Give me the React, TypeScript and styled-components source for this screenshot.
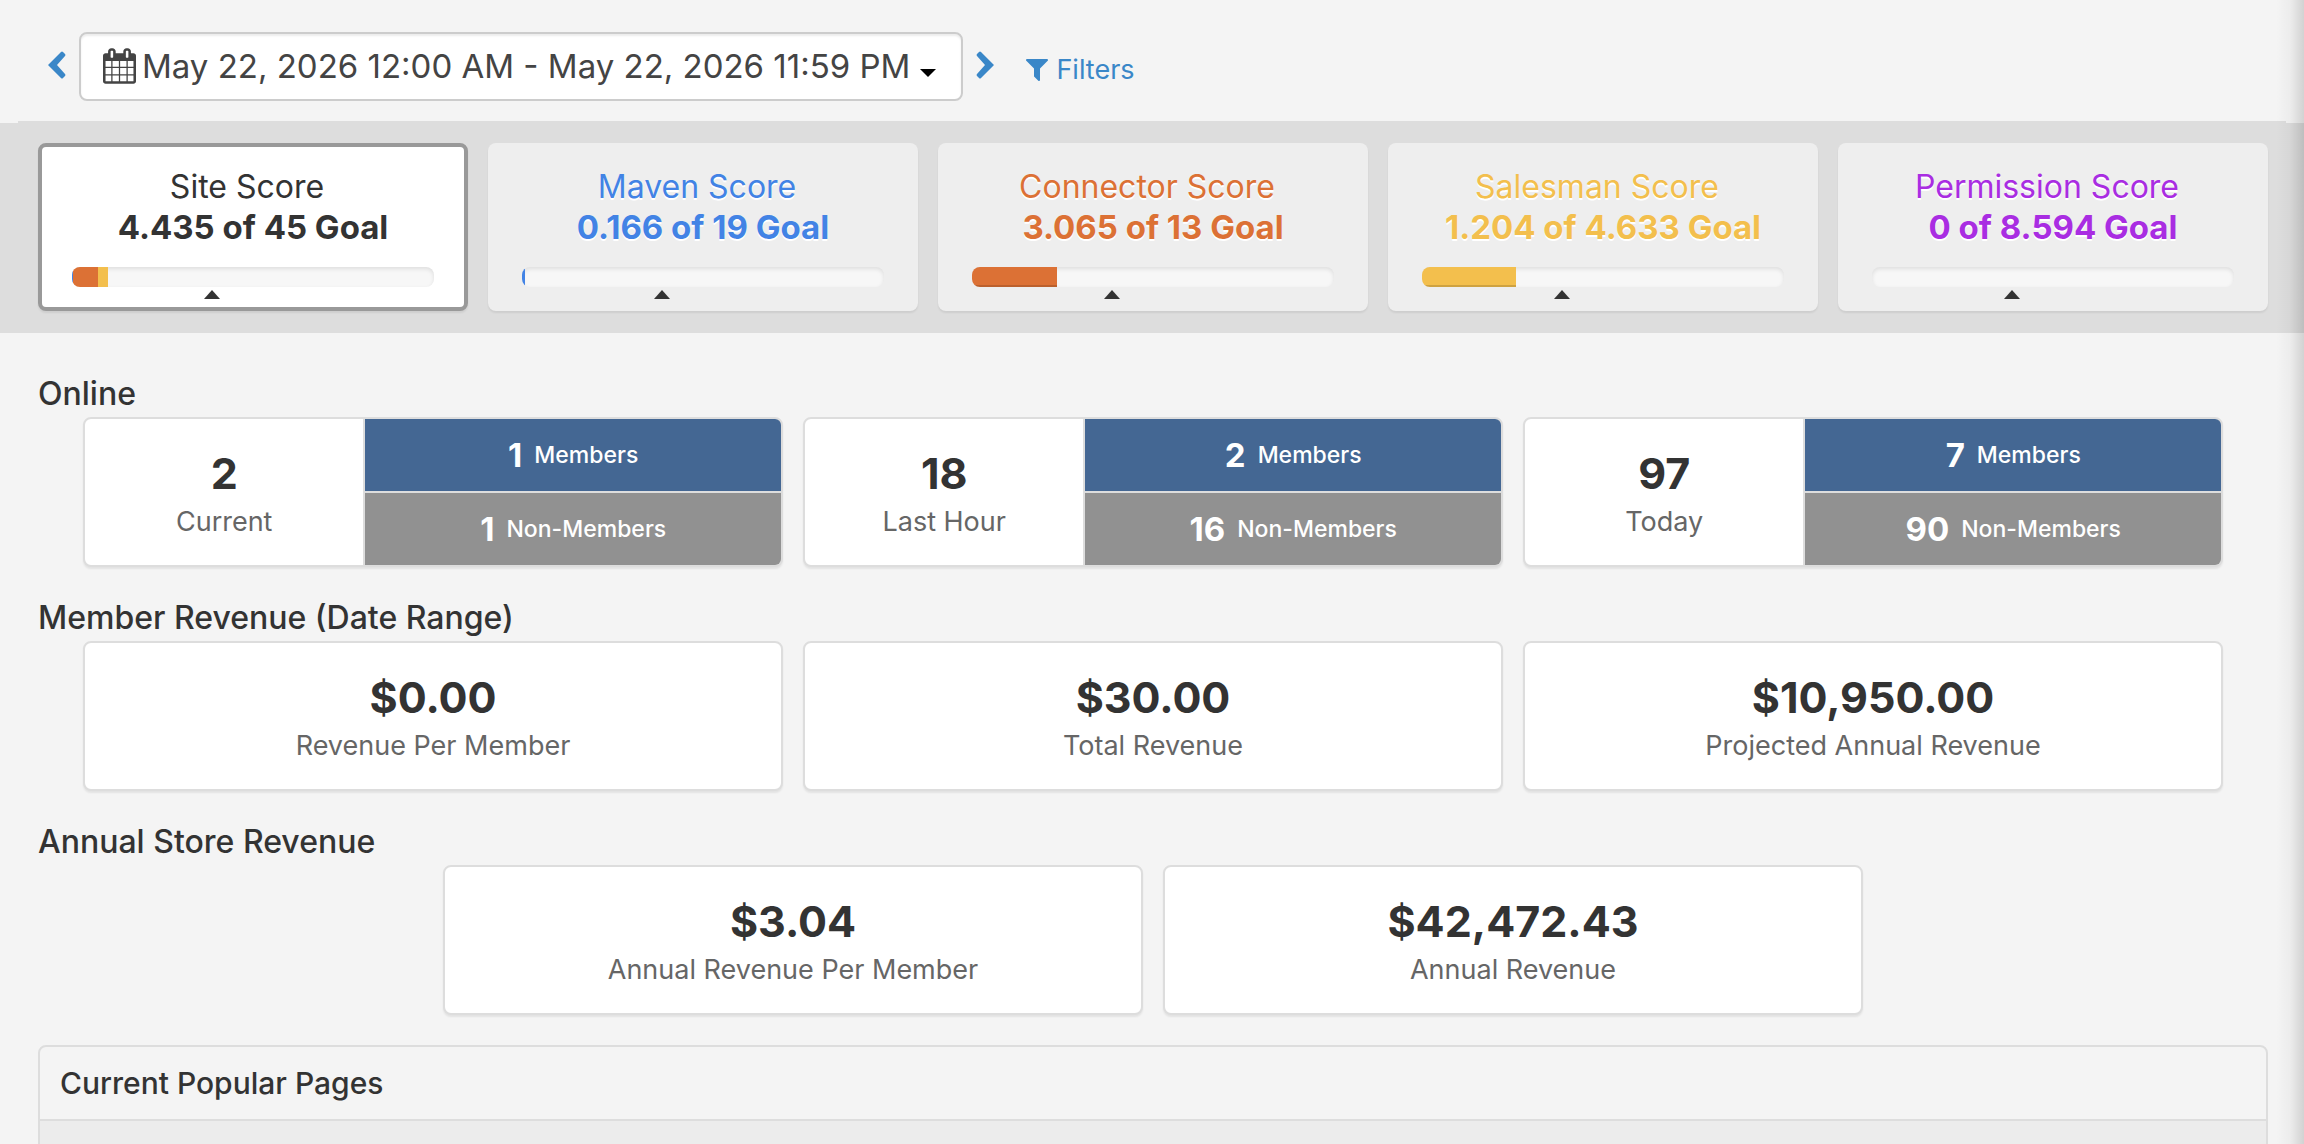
import React from 'react';
import styled, { createGlobalStyle } from 'styled-components';

const Global = createGlobalStyle`
  * { box-sizing: border-box; }
  body {
    margin: 0;
    background: #f4f4f4;
    color: #333;
    font-family: Inter, "Liberation Sans", sans-serif;
  }
  button { font-family: inherit; cursor: pointer; }
`;

const Page = styled.div`
  position: relative;
  height: 100vh;
  overflow: hidden;
`;

const EdgeShadow = styled.div`
  position: absolute;
  top: 0;
  right: 0;
  bottom: 0;
  width: 28px;
  background: linear-gradient(to right, rgba(0, 0, 0, 0), rgba(0, 0, 0, 0.03) 50%, rgba(0, 0, 0, 0.14));
  pointer-events: none;
`;

const Toolbar = styled.header`
  display: flex;
  align-items: flex-start;
  margin: 0 18px;
  padding: 32px 28px 20px 30px;
  border-bottom: 2px solid #ddd;
`;

const StepButton = styled.button`
  display: flex;
  padding: 19px 0 0;
  border: 0;
  background: none;
  color: #3a87c8;
`;

const DateRange = styled.button`
  display: flex;
  align-items: center;
  height: 69px;
  margin: 0 13px 0 12px;
  padding: 0 25px 2px 22px;
  border: 2px solid #ccc;
  border-radius: 8px;
  background: #fff;
  box-shadow: inset 0 2px 2px rgba(0, 0, 0, 0.075);
  color: #444;
  font-size: 33px;
  line-height: 40px;
  white-space: nowrap;
`;

const DateText = styled.span`
  margin: 0 10px 0 6px;
`;

const Caret = styled.span`
  margin-top: 14px;
  border: 8px solid transparent;
  border-top-color: #000;
  border-bottom: 0;
`;

const FilterLink = styled.a`
  display: flex;
  align-items: center;
  gap: 8px;
  margin: 20px 0 0 31px;
  color: #3a87c8;
  font-size: 27px;
  line-height: 36px;
  text-decoration: none;
`;

const ScoreBand = styled.section`
  display: grid;
  grid-template-columns: repeat(5, 1fr);
  gap: 20px;
  padding: 20px 36px 22px 38px;
  background: #ddd;
`;

const ScoreCard = styled.button<{ $tone: string; $active?: boolean }>`
  display: flex;
  flex-direction: column;
  height: 168px;
  padding: ${(p) => (p.$active ? '20px 30px 0' : '24px 34px 0')};
  border: ${(p) => (p.$active ? '4px solid #999' : '0')};
  border-radius: 8px;
  background: ${(p) => (p.$active ? '#fff' : '#eee')};
  box-shadow: 0 2px 2px rgba(0, 0, 0, 0.07);
  color: ${(p) => p.$tone};
  font-size: 33px;
  line-height: 40px;
  text-align: center;
  text-shadow: 0 2px 0 #fff;
`;

const ScoreName = styled.span`
  padding-right: 12px;
  font-size: 32px;
`;

const ScoreValue = styled.strong`
  font-weight: 700;
`;

const Track = styled.span`
  display: flex;
  height: 20px;
  margin-top: 20px;
  border-radius: 8px;
  overflow: hidden;
  background: #f7f7f7;
  box-shadow: inset 0 2px 4px rgba(0, 0, 0, 0.1);
`;

const Fill = styled.span<{ $tone: string; $flat: boolean }>`
  background: ${(p) => p.$tone};
  box-shadow: ${(p) => (p.$flat ? 'none' : 'inset 0 -2px 0 rgba(0, 0, 0, 0.15)')};
`;

const Pace = styled.span`
  align-self: flex-start;
  margin: 3px 0 0 132px;
  border: 8px solid transparent;
  border-bottom: 9px solid #333;
  border-top: 0;
`;

const Body = styled.main`
  padding: 40px 36px 0 38px;
`;

const Group = styled.section`
  margin-bottom: 30px;
`;

const GroupTitle = styled.h2`
  margin: 0;
  height: 44px;
  font-size: 32px;
  font-weight: 500;
  line-height: 42px;
`;

const StatRow = styled.div`
  display: flex;
  justify-content: center;
  gap: 20px;
  padding: 0 45px;
`;

const StatCard = styled.article`
  display: flex;
  flex: 0 0 calc((100% - 40px) / 3);
  height: 150px;
  border: 2px solid #ddd;
  border-radius: 8px;
  overflow: hidden;
  background: #fff;
  box-shadow: 0 2px 2px rgba(0, 0, 0, 0.07);
`;

const Stat = styled.div`
  display: flex;
  flex-direction: column;
  flex: 1;
  padding-top: 28px;
  text-align: center;
`;

const StatValue = styled.strong`
  font-size: 43px;
  font-weight: 700;
  line-height: 52px;
`;

const StatLabel = styled.span`
  color: #666;
  font-size: 27px;
  line-height: 46px;
`;

const Split = styled.div`
  display: flex;
  flex-direction: column;
  flex: 0 0 60%;
  gap: 2px;
  border-left: 2px solid #ddd;
  background: #ddd;
`;

const SplitPart = styled.div<{ $bg: string }>`
  display: flex;
  flex: 1;
  align-items: center;
  justify-content: center;
  gap: 12px;
  background: ${(p) => p.$bg};
  color: #fff;
  font-size: 23px;
  font-weight: 500;
`;

const SplitCount = styled.strong`
  font-size: 33px;
  font-weight: 700;
`;

const Panel = styled.section`
  border: 2px solid #ddd;
  border-radius: 8px;
`;

const PanelTitle = styled.h2`
  margin: 0;
  padding: 16px 20px;
  border-bottom: 2px solid #ddd;
  font-size: 30px;
  font-weight: 500;
  line-height: 40px;
`;

const PanelBody = styled.div`
  height: 400px;
  background: #ececec;
`;

const CALENDAR =
  'M128 1664h288v-288h-288v288zm352 0h320v-288h-320v288zm-352-352h288v-320h-288v320zm352 0h320v-320h-320v320zm-352-384h288v-288h-288v288zm736 736h320v-288h-320v288zm-384-736h320v-288h-320v288zm768 736h288v-288h-288v288zm-384-352h320v-320h-320v320zm-352-864v-288q0-13-9.5-22.5t-22.5-9.5h-64q-13 0-22.5 9.5t-9.5 22.5v288q0 13 9.5 22.5t22.5 9.5h64q13 0 22.5-9.5t9.5-22.5zm736 864h288v-320h-288v320zm-384-384h320v-288h-320v288zm384 0h288v-288h-288v288zm32-480v-288q0-13-9.5-22.5t-22.5-9.5h-64q-13 0-22.5 9.5t-9.5 22.5v288q0 13 9.5 22.5t22.5 9.5h64q13 0 22.5-9.5t9.5-22.5zm384-64v1280q0 52-38 90t-90 38h-1408q-52 0-90-38t-38-90v-1280q0-52 38-90t90-38h128v-96q0-66 47-113t113-47h64q66 0 113 47t47 113v96h384v-96q0-66 47-113t113-47h64q66 0 113 47t47 113v96h128q52 0 90 38t38 90z';
const FUNNEL =
  'M1403 39q17 41-14 70l-493 493v742q0 42-39 59-13 5-25 5-27 0-45-19l-256-256q-19-19-19-45v-486l-493-493q-31-29-14-70 17-39 59-39h1280q42 0 59 39z';

const Chevron = ({ d }: { d: string }) => (
  <svg width="19" height="28" viewBox="0 0 19 28" aria-hidden="true">
    <path d={d} fill="currentColor" />
  </svg>
);

const BLUE = '#4283e5';
const ORANGE = '#dc7135';
const YELLOW = '#f3bf4d';
const PURPLE = '#a92de2';

type Score = {
  name: string;
  value: number;
  goal: number;
  tone: string;
  parts: { value: number; tone: string }[];
};

const scores: Score[] = [
  {
    name: 'Site Score',
    value: 4.435,
    goal: 45,
    tone: '#333',
    parts: [
      { value: 0.166, tone: BLUE },
      { value: 3.065, tone: ORANGE },
      { value: 1.204, tone: YELLOW },
    ],
  },
  { name: 'Maven Score', value: 0.166, goal: 19, tone: BLUE, parts: [{ value: 0.166, tone: BLUE }] },
  { name: 'Connector Score', value: 3.065, goal: 13, tone: ORANGE, parts: [{ value: 3.065, tone: ORANGE }] },
  { name: 'Salesman Score', value: 1.204, goal: 4.633, tone: YELLOW, parts: [{ value: 1.204, tone: YELLOW }] },
  { name: 'Permission Score', value: 0, goal: 8.594, tone: PURPLE, parts: [] },
];

const online = [
  { total: 2, label: 'Current', members: 1, guests: 1 },
  { total: 18, label: 'Last Hour', members: 2, guests: 16 },
  { total: 97, label: 'Today', members: 7, guests: 90 },
];

const revenue = [
  {
    title: 'Member Revenue (Date Range)',
    stats: [
      ['$0.00', 'Revenue Per Member'],
      ['$30.00', 'Total Revenue'],
      ['$10,950.00', 'Projected Annual Revenue'],
    ],
  },
  {
    title: 'Annual Store Revenue',
    stats: [
      ['$3.04', 'Annual Revenue Per Member'],
      ['$42,472.43', 'Annual Revenue'],
    ],
  },
];

export default function App() {
  return (
    <Page>
      <Global />
      <Toolbar>
        <StepButton type="button" aria-label="Previous day">
          <Chevron d="M13 1Q14 0 15 1L17 3Q18 4 17 5L9 14L17 23Q18 24 17 25L15 27Q14 28 13 27L0 14Z" />
        </StepButton>
        <DateRange type="button">
          <svg width="33" height="36" viewBox="0 0 1664 1792" aria-hidden="true">
            <path d={CALENDAR} fill="currentColor" />
          </svg>
          <DateText>May 22, 2026 12:00 AM - May 22, 2026 11:59 PM</DateText>
          <Caret />
        </DateRange>
        <StepButton type="button" aria-label="Next day">
          <Chevron d="M5 1Q4 0 3 1L1 3Q0 4 1 5L9 14L1 23Q0 24 1 25L3 27Q4 28 5 27L18 14Z" />
        </StepButton>
        <FilterLink href="#filters">
          <svg width="22" height="22" viewBox="0 0 1408 1408" aria-hidden="true">
            <path d={FUNNEL} fill="currentColor" />
          </svg>
          Filters
        </FilterLink>
      </Toolbar>

      <ScoreBand>
        {scores.map((s, i) => (
          <ScoreCard key={s.name} type="button" $tone={s.tone} $active={i === 0}>
            <ScoreName>{s.name}</ScoreName>
            <ScoreValue>{`${s.value} of ${s.goal} Goal`}</ScoreValue>
            <Track>
              {s.parts.map((p) => (
                <Fill
                  key={p.tone}
                  $tone={p.tone}
                  $flat={s.parts.length > 1}
                  style={{ width: `${(p.value / s.goal) * 100}%` }}
                />
              ))}
            </Track>
            <Pace />
          </ScoreCard>
        ))}
      </ScoreBand>

      <Body>
        <Group>
          <GroupTitle>Online</GroupTitle>
          <StatRow>
            {online.map((o) => (
              <StatCard key={o.label}>
                <Stat>
                  <StatValue>{o.total}</StatValue>
                  <StatLabel>{o.label}</StatLabel>
                </Stat>
                <Split>
                  <SplitPart $bg="#446793">
                    <SplitCount>{o.members}</SplitCount>
                    <span>Members</span>
                  </SplitPart>
                  <SplitPart $bg="#919191">
                    <SplitCount>{o.guests}</SplitCount>
                    <span>Non-Members</span>
                  </SplitPart>
                </Split>
              </StatCard>
            ))}
          </StatRow>
        </Group>
        {revenue.map((group) => (
          <Group key={group.title}>
            <GroupTitle>{group.title}</GroupTitle>
            <StatRow>
              {group.stats.map(([value, label]) => (
                <StatCard key={label}>
                  <Stat>
                    <StatValue>{value}</StatValue>
                    <StatLabel>{label}</StatLabel>
                  </Stat>
                </StatCard>
              ))}
            </StatRow>
          </Group>
        ))}
        <Panel>
          <PanelTitle>Current Popular Pages</PanelTitle>
          <PanelBody />
        </Panel>
      </Body>
      <EdgeShadow />
    </Page>
  );
}
